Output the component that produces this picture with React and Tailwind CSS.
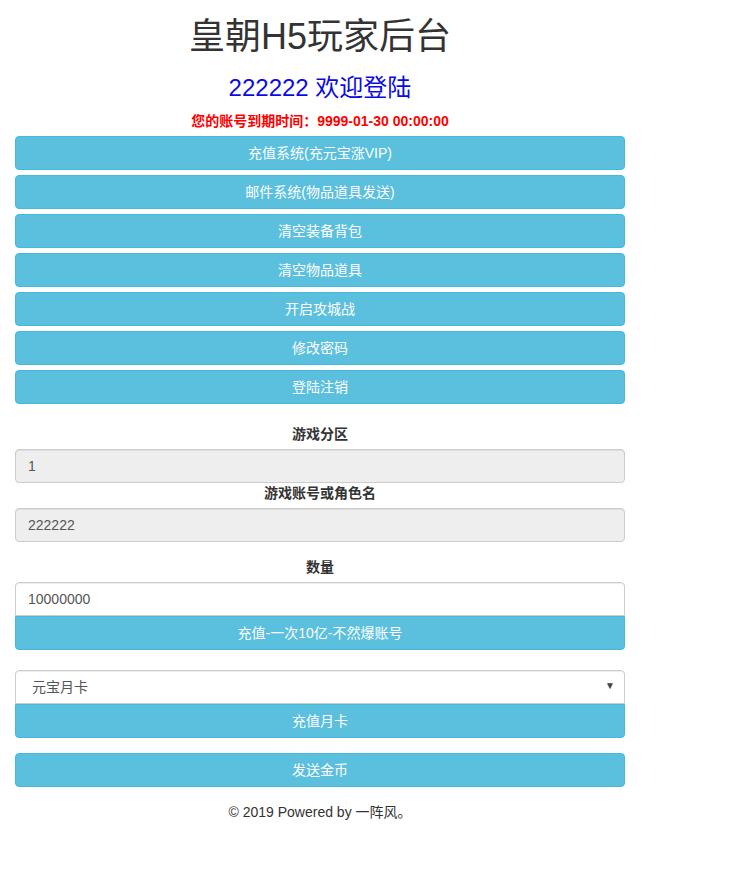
import React from 'react';

const menu = [
  '充值系统(充元宝涨VIP)',
  '邮件系统(物品道具发送)',
  '清空装备背包',
  '清空物品道具',
  '开启攻城战',
  '修改密码',
  '登陆注销',
];

const font = "font-['Helvetica_Neue',Helvetica,'Liberation_Sans','Noto_Sans_CJK_SC',sans-serif]";

function InfoButton({ children, className = 'rounded-[4px]' }) {
  return (
    <button
      type="button"
      className={`block w-full h-[34px] bg-[#5bc0de] border border-[#46b8da] text-white text-[14px] leading-[20px] ${className}`}
    >
      {children}
    </button>
  );
}

function Label({ children, className = '' }) {
  return (
    <div className={`text-center text-[14px] leading-[20px] font-bold text-[#333] ${className}`}>{children}</div>
  );
}

function Field({ value, disabled, className = 'rounded-[4px]' }) {
  return (
    <input
      readOnly
      disabled={disabled}
      value={value}
      className={`block w-full h-[34px] px-[12px] border border-[#ccc] text-[14px] text-[#555] shadow-[inset_0_1px_1px_rgba(0,0,0,0.075)] outline-none ${
        disabled ? 'bg-[#eee]' : 'bg-white'
      } ${className}`}
    />
  );
}

export default function App() {
  return (
    <div className={`w-[640px] px-[15px] pb-[40px] bg-white ${font}`}>
      <h1 className="pt-[17px] text-center text-[36px] leading-[40px] text-[#333]">皇朝H5玩家后台</h1>
      <h3 className="mt-[17px] text-center text-[24px] leading-[28px] text-[#0a0ae6]">222222 欢迎登陆</h3>
      <div className="mt-[10px] text-center text-[14px] leading-[18px] font-bold text-[#ff0000]">
        您的账号到期时间：9999-01-30 00:00:00
      </div>

      <div className="mt-[6px] flex flex-col gap-[5px]">
        {menu.map((m) => (
          <InfoButton key={m}>{m}</InfoButton>
        ))}
      </div>

      <Label className="mt-[20px]">游戏分区</Label>
      <Field value="1" disabled className="mt-[5px] rounded-[4px]" />
      <Label>游戏账号或角色名</Label>
      <Field value="222222" disabled className="mt-[5px] rounded-[4px]" />

      <Label className="mt-[15px]">数量</Label>
      <Field value="10000000" className="mt-[5px] rounded-t-[4px]" />
      <InfoButton className="rounded-b-[4px]">充值-一次10亿-不然爆账号</InfoButton>

      <div className="relative mt-[20px]">
        <select className="block w-full h-[34px] pl-[16px] pr-[24px] appearance-none bg-white border border-[#ccc] rounded-t-[4px] text-[14px] text-[#555] shadow-[inset_0_1px_1px_rgba(0,0,0,0.075)] outline-none">
          <option>元宝月卡</option>
        </select>
        <span className="pointer-events-none absolute right-[10px] top-[11px] text-[10px] leading-[10px] text-[#444]">▼</span>
      </div>
      <InfoButton className="rounded-b-[4px]">充值月卡</InfoButton>

      <InfoButton className="mt-[15px] rounded-[4px]">发送金币</InfoButton>

      <div className="mt-[15px] text-center text-[14px] leading-[20px] text-[#333]">© 2019 Powered by 一阵风。</div>
    </div>
  );
}
